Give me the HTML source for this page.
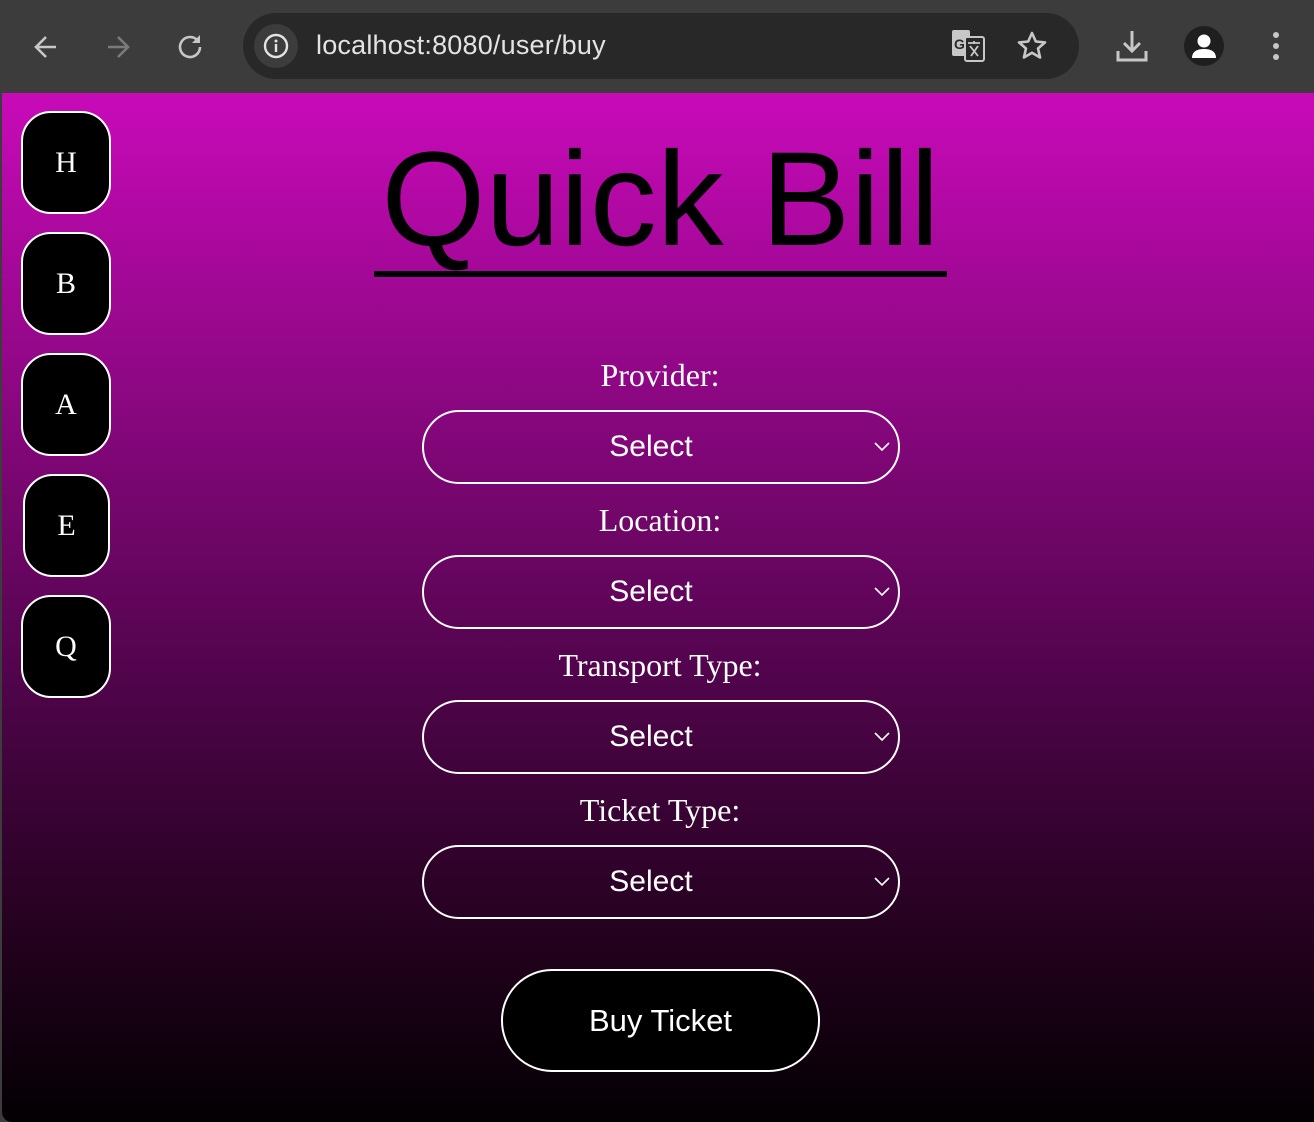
<!DOCTYPE html>
<html><head><meta charset="utf-8"><style>
*{margin:0;padding:0;box-sizing:border-box}
body{width:1314px;height:1122px;overflow:hidden;background:#3c3c3c;font-family:"Liberation Sans",sans-serif;position:relative}
.bar{position:absolute;left:0;top:0;width:1314px;height:93px;background:#3c3c3c}
.omni{position:absolute;left:243px;top:13px;width:836px;height:66px;border-radius:33px;background:#282828}
.info{position:absolute;left:254px;top:24px;width:44px;height:44px;border-radius:22px;background:#3c3c3c}
.url{position:absolute;left:316px;top:30px;font-size:27px;color:#e3e3e3;letter-spacing:0.2px}
.page{position:absolute;left:2px;top:93px;width:1312px;height:1029px;background:linear-gradient(#c80ab9,#8a0780 30%,#4a0445 60%,#1e0119 85%,#030003);border-bottom-left-radius:10px}
.nav{position:absolute;background:#000;border:2px solid #fff;border-radius:30px;color:#fff;font-family:"Liberation Serif",serif;font-size:30px;display:flex;align-items:center;justify-content:center}
h1{position:absolute;left:324px;top:125px;width:673px;text-align:center;font-weight:normal;font-size:134px;color:#000;line-height:150px;white-space:nowrap}
.ul{position:absolute;left:374px;top:271px;width:573px;height:6px;background:#000}
.lbl{position:absolute;left:0;width:1320px;text-align:center;font-family:"Liberation Serif",serif;font-size:32px;color:#fff}
.sel{position:absolute;left:422px;width:478px;height:74px;border:2px solid #fff;border-radius:37px;color:#fff;font-size:30px}
.sel span{position:absolute;left:0;width:454px;text-align:center;top:18px}
.sel svg{position:absolute;right:8px;top:30px}
.btn{position:absolute;left:501px;top:969px;width:319px;height:103px;border:2px solid #fff;border-radius:51px;background:#000;color:#fff;font-size:31px;text-align:center;line-height:99px}
</style></head><body>
<div class="bar">
<svg style="position:absolute;left:32px;top:33px" width="28" height="28" viewBox="0 0 28 28"><path d="M24 14H5M14 4L4 14l10 10" stroke="#c7c7c7" stroke-width="2.6" fill="none"/></svg>
<svg style="position:absolute;left:104px;top:33px" width="28" height="28" viewBox="0 0 28 28"><path d="M4 14h19M14 4l10 10-10 10" stroke="#7a7a7a" stroke-width="2.6" fill="none"/></svg>
<svg style="position:absolute;left:176px;top:32px" width="28" height="28" viewBox="0 0 28 28"><path d="M22 9A10 10 0 1 0 24 15" stroke="#c7c7c7" stroke-width="2.6" fill="none"/><path d="M24 3v8h-8z" fill="#c7c7c7"/></svg>
<div class="omni"></div>
<div class="info"></div>
<svg style="position:absolute;left:263px;top:33px" width="26" height="26" viewBox="0 0 26 26"><circle cx="13" cy="13" r="11" stroke="#e3e3e3" stroke-width="2.4" fill="none"/><rect x="11.8" y="11" width="2.4" height="8" fill="#e3e3e3"/><circle cx="13" cy="8" r="1.5" fill="#e3e3e3"/></svg>
<div class="url">localhost:8080/user/buy</div>
<svg style="position:absolute;left:951px;top:29px" width="34" height="34" viewBox="0 0 34 34"><rect x="1" y="1" width="18" height="26" rx="2" fill="#c7c7c7"/><rect x="14" y="8" width="19" height="24" rx="2" fill="#282828" stroke="#c7c7c7" stroke-width="2"/><text x="3" y="20" font-size="14" font-weight="bold" fill="#282828" font-family="Liberation Sans">G</text><path d="M17 14h12M23 12v3M19 17l8 10M27 17l-7 10" stroke="#c7c7c7" stroke-width="1.8" fill="none"/></svg>
<svg style="position:absolute;left:1016px;top:30px" width="32" height="32" viewBox="0 0 32 32"><path d="M16 3l3.8 8.5 9.2.9-7 6.1 2.1 9-8.1-4.8-8.1 4.8 2.1-9-7-6.1 9.2-.9z" stroke="#c7c7c7" stroke-width="2.6" fill="none" stroke-linejoin="round"/></svg>
<svg style="position:absolute;left:1115px;top:29px" width="34" height="34" viewBox="0 0 34 34"><path d="M17 2v20M9 14l8 8 8-8" stroke="#c7c7c7" stroke-width="3" fill="none"/><path d="M3 22v9h28v-9" stroke="#c7c7c7" stroke-width="3" fill="none"/></svg>
<svg style="position:absolute;left:1184px;top:26px" width="40" height="40" viewBox="0 0 40 40"><circle cx="20" cy="20" r="20" fill="#1f1f1f"/><circle cx="20" cy="15" r="6.5" fill="#fff"/><path d="M8 32c0-7 6-9 12-9s12 2 12 9z" fill="#fff"/></svg>
<svg style="position:absolute;left:1268px;top:30px" width="16" height="32" viewBox="0 0 16 32"><circle cx="8" cy="5" r="3" fill="#c7c7c7"/><circle cx="8" cy="16" r="3" fill="#c7c7c7"/><circle cx="8" cy="27" r="3" fill="#c7c7c7"/></svg>
</div>
<div class="page"></div>
<div class="nav" style="left:21px;top:111px;width:90px;height:103px">H</div>
<div class="nav" style="left:21px;top:232px;width:90px;height:103px">B</div>
<div class="nav" style="left:21px;top:353px;width:90px;height:103px">A</div>
<div class="nav" style="left:23px;top:474px;width:87px;height:103px">E</div>
<div class="nav" style="left:21px;top:595px;width:90px;height:103px">Q</div>
<h1>Quick Bill</h1>
<div class="ul"></div>
<div class="lbl" style="top:357px">Provider:</div>
<div class="sel" style="top:410px"><span>Select</span><svg width="16" height="10" viewBox="0 0 16 10"><path d="M1 1l7 7 7-7" stroke="#fff" stroke-width="1.6" fill="none"/></svg></div>
<div class="lbl" style="top:502px">Location:</div>
<div class="sel" style="top:555px"><span>Select</span><svg width="16" height="10" viewBox="0 0 16 10"><path d="M1 1l7 7 7-7" stroke="#fff" stroke-width="1.6" fill="none"/></svg></div>
<div class="lbl" style="top:647px">Transport Type:</div>
<div class="sel" style="top:700px"><span>Select</span><svg width="16" height="10" viewBox="0 0 16 10"><path d="M1 1l7 7 7-7" stroke="#fff" stroke-width="1.6" fill="none"/></svg></div>
<div class="lbl" style="top:792px">Ticket Type:</div>
<div class="sel" style="top:845px"><span>Select</span><svg width="16" height="10" viewBox="0 0 16 10"><path d="M1 1l7 7 7-7" stroke="#fff" stroke-width="1.6" fill="none"/></svg></div>
<div class="btn">Buy Ticket</div>
</body></html>
